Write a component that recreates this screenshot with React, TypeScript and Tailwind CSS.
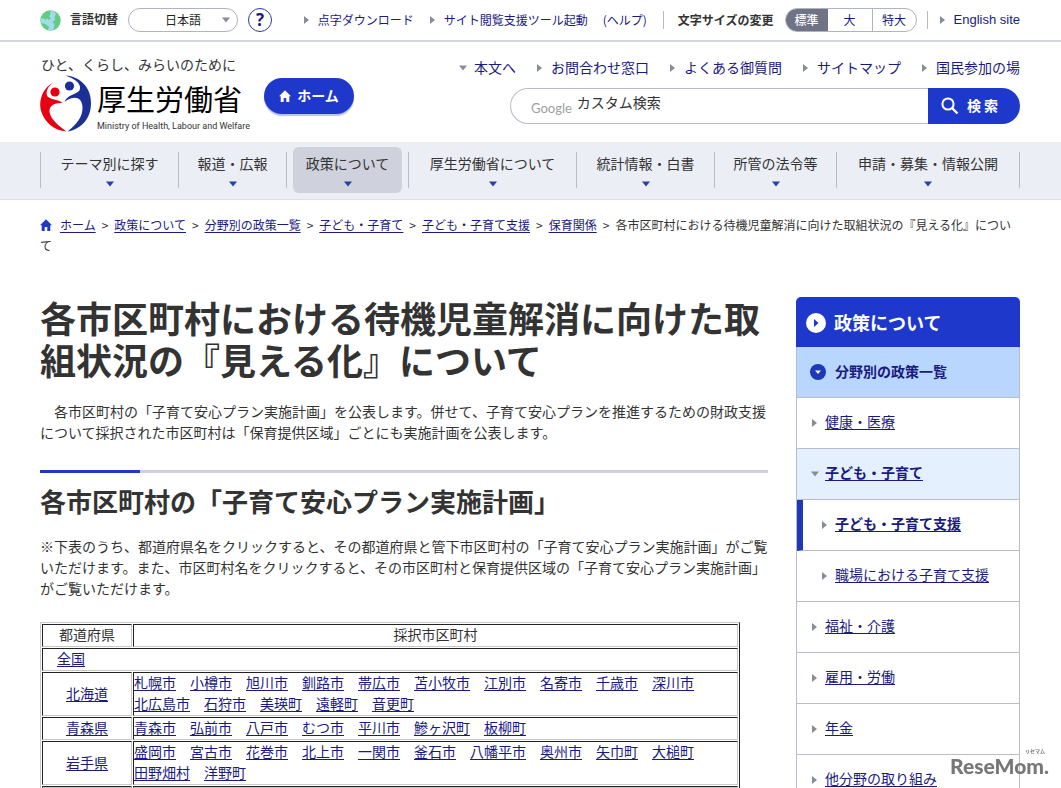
import React from "react";

const LINK = "text-[#1a1a80]";

function Tri({ dir = "right", className = "text-[#888c98]" }: { dir?: "right" | "down"; className?: string }) {
  return dir === "right" ? (
    <svg width="7" height="8" viewBox="0 0 7 8" className={className} aria-hidden="true">
      <path d="M1 0v8l5-4z" fill="currentColor" />
    </svg>
  ) : (
    <svg width="8" height="6" viewBox="0 0 8 6" className={className} aria-hidden="true">
      <path d="M0 0.5h8L4 5.5z" fill="currentColor" />
    </svg>
  );
}

function House({ className }: { className: string }) {
  return (
    <svg width="12" height="12" viewBox="0 0 12 12" className={className} aria-hidden="true">
      <path d="M6 0.3L0 6.2h1.700V12h3V8h2.600v4h3V6.200H12z" fill="currentColor" />
    </svg>
  );
}

function Globe() {
  return (
    <svg width="21" height="21" viewBox="0 0 21 21" aria-hidden="true">
      <circle cx="10.5" cy="10.5" r="10.2" fill="#62cb86" />
      <path
        d="M13.500 0.800L16 4l-1.500 3 .5 3-2.500 2 2 2.500-.5 4L12 20.500l-4-.3 1-3.200-3.500-3L1 13l-.5-3.500 2-1.500 3 1.500 2-1 1.500 1.500L11 8 9 6.500 10.500 4l-.5-2.500z"
        fill="#a5dbe8"
      />
    </svg>
  );
}

function Emblem() {
  return (
    <svg width="52" height="57" viewBox="0 0 52 57" className="shrink-0" aria-hidden="true">
      <path
        d="M13 7.500C3 13 -1.500 25 0.800 35C4 47 14 55.500 26.500 56.500C18.500 51 10.500 44 9.500 37C9 31 14 27.500 22.500 28C18 24 12.500 25.500 7.500 21.500C5 17 8 11.500 13 7.500z"
        fill="#e60012"
      />
      <path
        d="M25.500 0.500C40 1.500 51 12 51 28C51 43 42 54 27.500 56.500C36 50 43 42 42.500 32C42 22 33.500 20 24.500 27C27.500 19.500 35 20 39.500 15.500C42 9.500 36 4 25.500 0.500z"
        fill="#1b2f95"
      />
      <circle cx="15" cy="17" r="4.600" fill="#e60012" />
      <circle cx="29.500" cy="11" r="4.600" fill="#1b2f95" />
    </svg>
  );
}

function TopBar() {
  return (
    <div className="flex h-[42px] items-center border-b-2 border-[#d3d5df] pl-10 pr-[41px] text-[12px] leading-6">
      <div className="flex items-center">
        <Globe />
        <label htmlFor="lang" className="ml-[9px] pb-0.5 font-bold">言語切替</label>
        <div className="relative ml-[10px] h-6 w-[110px]">
          <select
            id="lang"
            defaultValue="ja"
            className="h-6 w-full appearance-none rounded-full border border-[#b0b3c0] bg-white pl-9 pr-6 text-[12px] leading-5 text-[#222]"
          >
            <option value="ja">日本語</option>
          </select>
          <span className="pointer-events-none absolute right-2 top-[9px] flex">
            <Tri dir="down" />
          </span>
        </div>
        <button
          type="button"
          className="ml-[10px] flex size-6 items-center justify-center rounded-full border border-[#2a3a9a] font-['Open_Sans'] text-[17px] font-bold text-[#1a1a80]"
        >
          ?
        </button>
      </div>
      <div className="ml-auto flex items-center">
        <a href="#braille" className={`flex items-center gap-2 ${LINK}`}><Tri />点字ダウンロード</a>
        <a href="#tool" className={`ml-[15px] flex items-center gap-2 ${LINK}`}><Tri />サイト閲覧支援ツール起動</a>
        <a href="#help" className={`ml-[15px] ${LINK}`}>(ヘルプ)</a>
        <span className="ml-4 h-[18px] w-px bg-[#b8bac4]" />
        <span className="ml-[14px] font-bold">文字サイズの変更</span>
        <div className="ml-[11px] flex h-6 w-[132px] overflow-hidden rounded-full border border-[#b0b3c0] text-center leading-[22px]">
          <button type="button" className="w-[42px] bg-[#6f7385] font-medium text-white">標準</button>
          <button type="button" className={`w-11 ${LINK}`}>大</button>
          <button type="button" className={`flex-1 border-l border-[#b0b3c0] ${LINK}`}>特大</button>
        </div>
        <span className="ml-[10px] h-[18px] w-px bg-[#b8bac4]" />
        <a href="#english" className={`ml-[11px] flex items-center gap-2 font-['Liberation_Sans'] text-[13px] ${LINK}`}>
          <Tri />English site
        </a>
      </div>
    </div>
  );
}

const QUICK = ["お問合わせ窓口", "よくある御質問", "サイトマップ", "国民参加の場"];

function Header() {
  return (
    <header className="flex h-[100px] justify-between pl-10 pr-[41px]">
      <div className="flex">
        <a href="#top" className="w-[204px] pt-[11px]">
          <span className="block pl-px text-[14px] leading-[22px]">ひと、くらし、みらいのために</span>
          <span className="flex gap-[5px]">
            <Emblem />
            <span className="flex flex-col pt-1 text-black">
              <span className="whitespace-nowrap text-[29px] font-normal leading-[38px]">厚生労働省</span>
              <span className="whitespace-nowrap pt-[3px] font-['Roboto','Liberation_Sans'] text-[9px] leading-3 text-[#333]">
                Ministry of Health, Labour and Welfare
              </span>
            </span>
          </span>
        </a>
        <a
          href="#home"
          className="ml-5 mt-9 flex h-9 w-[90px] items-center justify-center gap-[6px] rounded-full bg-[#1f38cc] text-[14px] font-bold text-white shadow-[0_2px_1px_#b9c1ef]"
        >
          <House className="text-white" />
          <span className="pb-0.5">ホーム</span>
        </a>
      </div>
      <div className="w-[562px] pt-[15px]">
        <nav className={`flex justify-end gap-5 text-[14px] leading-[21px] ${LINK}`}>
          <a href="#main" className="flex items-center gap-[7px]"><Tri dir="down" />本文へ</a>
          {QUICK.map((q) => (
            <a key={q} href="#quick" className="flex items-center gap-2"><Tri />{q}</a>
          ))}
        </nav>
        <form className="ml-[52px] mt-[10px] flex h-9" onSubmit={(e) => e.preventDefault()}>
          <div className="flex flex-1 items-center rounded-l-full border border-r-0 border-[#b9bcc8] pl-5">
            <label htmlFor="q" className="pt-[3px] font-['Lato'] text-[13px] leading-5 text-[#a0a0a0]">Google</label>
            <input
              id="q"
              type="text"
              placeholder="カスタム検索"
              className="mb-2 ml-[5px] w-full min-w-0 flex-1 bg-transparent text-[14px] leading-5 outline-none placeholder:text-[#333]"
            />
          </div>
          <button
            type="submit"
            className="flex w-[92px] items-center gap-2 rounded-r-full bg-[#1f38cc] pl-[13px] text-[14px] font-bold text-white"
          >
            <svg width="18" height="18" viewBox="0 0 18 18" fill="none" stroke="currentColor" strokeWidth="2" aria-hidden="true">
              <circle cx="7" cy="7" r="5.600" />
              <path d="M11 11l5.500 5.500" strokeWidth="2.400" />
            </svg>
            <span className="flex gap-[3px] pb-0.5"><span>検</span><span>索</span></span>
          </button>
        </form>
      </div>
    </header>
  );
}

const NAV = ["テーマ別に探す", "報道・広報", "政策について", "厚生労働省について", "統計情報・白書", "所管の法令等", "申請・募集・情報公開"];

function GlobalNav() {
  return (
    <nav className="h-[58px] border-b border-[#dcdfe8] bg-[#ebeef4] pl-10 pr-[41px]">
      <ul className="grid h-full grid-cols-[138fr_108fr_122fr_168fr_138fr_122fr_184fr] items-center pb-0.5">
        {NAV.map((n, i) => (
          <li
            key={n}
            className={`flex h-9 items-center border-l border-[#b9bcc8] ${i === NAV.length - 1 ? "border-r" : ""}`}
          >
            <a
              href="#nav"
              className={`flex h-[46px] w-full flex-col items-center rounded-md pt-[6px] text-[14px] leading-[21px] ${
                i === 2 ? "mx-[6px] bg-[#cfd1dc]" : ""
              }`}
            >
              {n}
              <Tri dir="down" className="mt-[7px] text-[#263fae]" />
            </a>
          </li>
        ))}
      </ul>
    </nav>
  );
}

const CRUMBS = ["ホーム", "政策について", "分野別の政策一覧", "子ども・子育て", "子ども・子育て支援", "保育関係"];

function Breadcrumb() {
  return (
    <div className="pl-10 pr-[41px] pt-[14px] text-[12px] leading-[21px]">
      <House className="mr-2 inline-block align-[-1px] text-[#1f38cc]" />
      {CRUMBS.map((c) => (
        <React.Fragment key={c}>
          <a href="#crumb" className={`underline underline-offset-2 ${LINK}`}>{c}</a>
          <span className="mx-[6px]">&gt;</span>
        </React.Fragment>
      ))}
      各市区町村における待機児童解消に向けた取組状況の『見える化』について
    </div>
  );
}

const ROWS: { pref: string; lines: string[][] }[] = [
  {
    pref: "北海道",
    lines: [
      ["札幌市", "小樽市", "旭川市", "釧路市", "帯広市", "苫小牧市", "江別市", "名寄市", "千歳市", "深川市"],
      ["北広島市", "石狩市", "美瑛町", "遠軽町", "音更町"],
    ],
  },
  { pref: "青森県", lines: [["青森市", "弘前市", "八戸市", "むつ市", "平川市", "鰺ヶ沢町", "板柳町"]] },
  {
    pref: "岩手県",
    lines: [
      ["盛岡市", "宮古市", "花巻市", "北上市", "一関市", "釜石市", "八幡平市", "奥州市", "矢巾町", "大槌町"],
      ["田野畑村", "洋野町"],
    ],
  },
];

const CELL = "border border-b-[#c8c8c8] border-l-[#222] border-r-[#c8c8c8] border-t-[#222] p-0 font-normal";
const ULINK = "text-[#1a1a80] underline underline-offset-2";

function PrefTable() {
  return (
    <table className="mt-[23px] w-[700px] max-w-full table-fixed border-separate border-spacing-px border border-b-[#222] border-l-[#c8c8c8] border-r-[#222] border-t-[#c8c8c8] text-[14px] leading-[21px]">
      <colgroup>
        <col className="w-[90px]" />
        <col />
      </colgroup>
      <thead>
        <tr>
          <th className={`${CELL} pb-0.5 leading-[19px]`}>都道府県</th>
          <th className={`${CELL} pb-0.5 leading-[19px]`}>採択市区町村</th>
        </tr>
      </thead>
      <tbody>
        <tr>
          <td colSpan={2} className={`${CELL} pb-0.5 leading-[19px]`}>
            <a href="#all" className={`ml-[14px] ${ULINK}`}>全国</a>
          </td>
        </tr>
        {ROWS.map((r) => (
          <tr key={r.pref}>
            <td className={`${CELL} pb-0.5 text-center leading-[19px]`}><a href="#pref" className={ULINK}>{r.pref}</a></td>
            <td className={CELL}>
              {r.lines.map((line) => (
                <div key={line[0]} className="flex flex-wrap gap-x-[14px] pb-0.5 leading-[19px]">
                  {line.map((c) => (
                    <a key={c} href="#city" className={ULINK}>{c}</a>
                  ))}
                </div>
              ))}
            </td>
          </tr>
        ))}
        <tr>
          <td className={CELL} />
          <td className={CELL} />
        </tr>
      </tbody>
    </table>
  );
}

function Article() {
  return (
    <main id="main" className="-mt-[2px] min-w-0 flex-1">
      <h1 className="text-[36px] font-bold leading-[42px] text-[#333]">
        各市区町村における待機児童解消に向けた取組状況の『見える化』について
      </h1>
      <p className="mt-[21px] text-[14px] leading-[21px]">
        {"\u3000"}各市区町村の「子育て安心プラン実施計画」を公表します。併せて、子育て安心プランを推進するための財政支援について採択された市区町村は「保育提供区域」ごとにも実施計画を公表します。
      </p>
      <div className="mt-[27px] h-[3px] bg-[#cfd0dc]">
        <div className="h-full w-[100px] bg-[#1f38cc]" />
      </div>
      <h2 className="mt-[10px] text-[26px] font-bold leading-[36px] text-[#333]">各市区町村の「子育て安心プラン実施計画」</h2>
      <p className="mt-[17px] text-[14px] leading-[21px]">
        ※下表のうち、都道府県名をクリックすると、その都道府県と管下市区町村の「子育て安心プラン実施計画」がご覧いただけます。また、市区町村名をクリックすると、その市区町村と保育提供区域の「子育て安心プラン実施計画」がご覧いただけます。
      </p>
      <PrefTable />
    </main>
  );
}

type Item = { label: string; kind?: "open" | "current" | "child" };
const SIDE: Item[] = [
  { label: "健康・医療" },
  { label: "子ども・子育て", kind: "open" },
  { label: "子ども・子育て支援", kind: "current" },
  { label: "職場における子育て支援", kind: "child" },
  { label: "福祉・介護" },
  { label: "雇用・労働" },
  { label: "年金" },
  { label: "他分野の取り組み" },
];

const SIDE_STYLE = {
  plain: "pl-[14px]",
  open: "pl-[14px] bg-[#e4f0fe] font-bold",
  current: "border-l-[6px] border-l-[#1f38b8] pl-[18px] font-bold",
  child: "pl-6",
};

function Sidebar() {
  return (
    <aside className="-mt-px w-56 shrink-0 text-[14px] leading-[21px]">
      <a
        href="#policy"
        className="flex h-[50px] items-center gap-2 rounded-t-[5px] bg-[#1f38cc] pl-[10px] pt-0.5 text-[18px] font-bold text-white"
      >
        <svg width="20" height="20" viewBox="0 0 20 20" aria-hidden="true">
          <circle cx="10" cy="10" r="10" fill="#fff" />
          <path d="M8 6v8l4.500-4z" fill="#1f38cc" />
        </svg>
        <span className="pb-0.5">政策について</span>
      </a>
      <ul className="border-x border-[#b9bdcb]">
        <li className="flex h-[51px] items-center border-b border-[#b9bdcb] bg-[#b9d6ff] pl-[13px]">
          <a href="#fields" className={`flex items-center gap-[9px] font-bold ${LINK}`}>
            <svg width="16" height="16" viewBox="0 0 16 16" aria-hidden="true">
              <circle cx="8" cy="8" r="8" fill="#1f38b8" />
              <path d="M5 6.500h6L8 10z" fill="#fff" />
            </svg>
            <span className="pb-0.5">分野別の政策一覧</span>
          </a>
        </li>
        {SIDE.map((s) => (
          <li
            key={s.label}
            className={`flex h-[51px] items-center border-b border-b-[#b9bdcb] ${SIDE_STYLE[s.kind ?? "plain"]}`}
          >
            <span className="flex w-[14px]"><Tri dir={s.kind === "open" ? "down" : "right"} /></span>
            <a href="#field" className={`pb-[3px] ${ULINK}`}>{s.label}</a>
          </li>
        ))}
      </ul>
    </aside>
  );
}

export default function App() {
  return (
    <div className="bg-white font-['Noto_Sans_CJK_JP',sans-serif] text-[#333]">
      <TopBar />
      <Header />
      <GlobalNav />
      <Breadcrumb />
      <div className="flex gap-7 pl-10 pr-[41px] pt-[42px]">
        <Article />
        <Sidebar />
      </div>
      <div className="fixed bottom-[10px] right-3 flex flex-col items-end text-[#777]">
        <span className="mr-1 text-[5px] font-bold leading-[6px]">リセマム</span>
        <span className="font-['Lato'] text-[21px] font-black leading-6">ReseMom.</span>
      </div>
    </div>
  );
}
